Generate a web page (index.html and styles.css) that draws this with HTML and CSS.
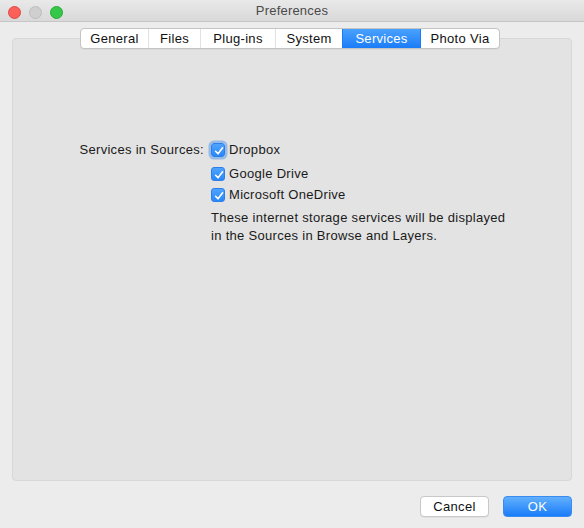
FILE: index.html
```html
<!DOCTYPE html>
<html>
<head>
<meta charset="utf-8">
<link rel="stylesheet" href="styles.css">
</head>
<body>
<div class="window">
  <div class="titlebar">
    <div class="lights">
      <span class="light red"></span>
      <span class="light gray"></span>
      <span class="light green"></span>
    </div>
    <div class="title">Preferences</div>
  </div>
  <div class="content">
    <div class="tabs">
      <div class="tab t-general">General</div>
      <div class="tab t-files">Files</div>
      <div class="tab t-plugins">Plug-ins</div>
      <div class="tab t-system">System</div>
      <div class="tab t-services active">Services</div>
      <div class="tab t-photo">Photo Via</div>
    </div>
    <div class="panel">
      <div class="form">
        <div class="label">Services in Sources:</div>
        <div class="options">
          <div class="option o1"><span class="cb focus"><svg viewBox="0 0 14 14" width="14" height="14"><path d="M3.6 7.3 L6 9.8 L10.6 3.8" fill="none" stroke="#fff" stroke-width="1.6" stroke-linecap="round" stroke-linejoin="round"/></svg></span>Dropbox</div>
          <div class="option o2"><span class="cb"><svg viewBox="0 0 14 14" width="14" height="14"><path d="M3.6 7.3 L6 9.8 L10.6 3.8" fill="none" stroke="#fff" stroke-width="1.6" stroke-linecap="round" stroke-linejoin="round"/></svg></span>Google Drive</div>
          <div class="option o3"><span class="cb"><svg viewBox="0 0 14 14" width="14" height="14"><path d="M3.6 7.3 L6 9.8 L10.6 3.8" fill="none" stroke="#fff" stroke-width="1.6" stroke-linecap="round" stroke-linejoin="round"/></svg></span>Microsoft OneDrive</div>
          <p class="desc">These internet storage services will be displayed<br>in the Sources in Browse and Layers.</p>
        </div>
      </div>
    </div>
    <div class="buttons">
      <button class="btn cancel">Cancel</button>
      <button class="btn ok">OK</button>
    </div>
  </div>
</div>
</body>
</html>
```
FILE: styles.css
```css
html, body {
  margin: 0;
  padding: 0;
}
body {
  width: 584px;
  height: 528px;
  overflow: hidden;
  background: #ececec;
  font-family: "Liberation Sans", Arial, sans-serif;
  font-size: 13px;
  letter-spacing: 0.3px;
  color: #1a1a1a;
}
.window {
  width: 584px;
  height: 528px;
  display: flex;
  flex-direction: column;
}
.titlebar {
  height: 21px;
  border-bottom: 1px solid #c6c6c6;
  background: linear-gradient(#e9e9e9, #d9d9d9);
  display: flex;
  align-items: center;
  position: relative;
}
.lights {
  display: flex;
  gap: 8px;
  padding-left: 8px;
  padding-top: 3px;
}
.light {
  width: 11px;
  height: 11px;
  border-radius: 50%;
  display: block;
}
.light.red { background: #fc605b; border: 0.5px solid #de4a44; }
.light.gray { background: #cfcfcf; border: 0.5px solid #bdbdbd; }
.light.green { background: #34c84a; border: 0.5px solid #26a935; }
.title {
  position: absolute;
  left: 0;
  right: 0;
  top: 0;
  line-height: 22px;
  text-align: center;
  color: #4a4a4a;
  font-size: 13px;
  letter-spacing: 0.2px;
}
.content {
  flex: 1;
  display: flex;
  flex-direction: column;
  padding: 6px 12px 0 12px;
}
.tabs {
  align-self: flex-start;
  margin-left: 68px;
  display: flex;
  height: 19px;
  border: 1px solid #c4c4c4;
  border-radius: 4px;
  background: #fff;
  position: relative;
  z-index: 1;
  overflow: hidden;
  box-shadow: 0 0.5px 0.5px rgba(0,0,0,0.08);
}
.tab {
  line-height: 19px;
  text-align: center;
  border-left: 1px solid #e2e2e2;
  color: #111;
}
.tab:first-child { border-left: none; }
.t-general { width: 67px; }
.t-files { width: 51px; }
.t-plugins { width: 74px; }
.t-system { width: 66px; }
.t-services { width: 77px; }
.t-photo { width: 78px; }
.tab.active {
  background: linear-gradient(#4aa2fd, #1b7cf8);
  color: #fff;
  border-left-color: #1b7cf8;
}
.tab.active + .tab { border-left-color: #1b7cf8; }
.panel {
  margin-top: -11px;
  background: #e3e3e3;
  border: 1px solid #d7d7d7;
  border-radius: 4px;
  box-sizing: border-box;
  height: 443px;
}
.form {
  display: grid;
  grid-template-columns: 191px auto;
  column-gap: 7px;
  padding-top: 102px;
}
.label {
  text-align: right;
  line-height: 18px;
  color: #1a1a1a;
}
.options {
  display: flex;
  flex-direction: column;
}
.option {
  display: flex;
  align-items: center;
  line-height: 18px;
  height: 18px;
  gap: 4px;
}
.o2 { margin-top: 6px; }
.o3 { margin-top: 3px; }
.cb {
  width: 14px;
  height: 14px;
  border-radius: 3px;
  background: linear-gradient(#4fa4fd, #2a87f9);
  display: block;
  box-sizing: border-box;
  border: 0.5px solid #2c7fe8;
}
.cb svg { display: block; margin: -0.5px; }
.cb.focus {
  box-shadow: 0 0 0 2.5px rgba(90, 155, 235, 0.55);
}
.desc {
  margin: 5px 0 0 0;
  line-height: 18px;
  color: #1a1a1a;
}
.buttons {
  display: flex;
  justify-content: flex-end;
  gap: 14px;
  margin-top: 15px;
}
.btn {
  font-family: "Liberation Sans", Arial, sans-serif;
  font-size: 13px;
  letter-spacing: 0.3px;
  height: 21px;
  padding: 0;
  border-radius: 4px;
  line-height: 19px;
  cursor: default;
}
.cancel {
  width: 69px;
  background: #fff;
  border: 1px solid #c8c8c8;
  color: #111;
  box-shadow: 0 0.5px 0.5px rgba(0,0,0,0.08);
}
.ok {
  width: 69px;
  background: linear-gradient(#62b0fd, #1a7cf8);
  border: 1px solid #3a8cf2;
  color: #fff;
}
```
